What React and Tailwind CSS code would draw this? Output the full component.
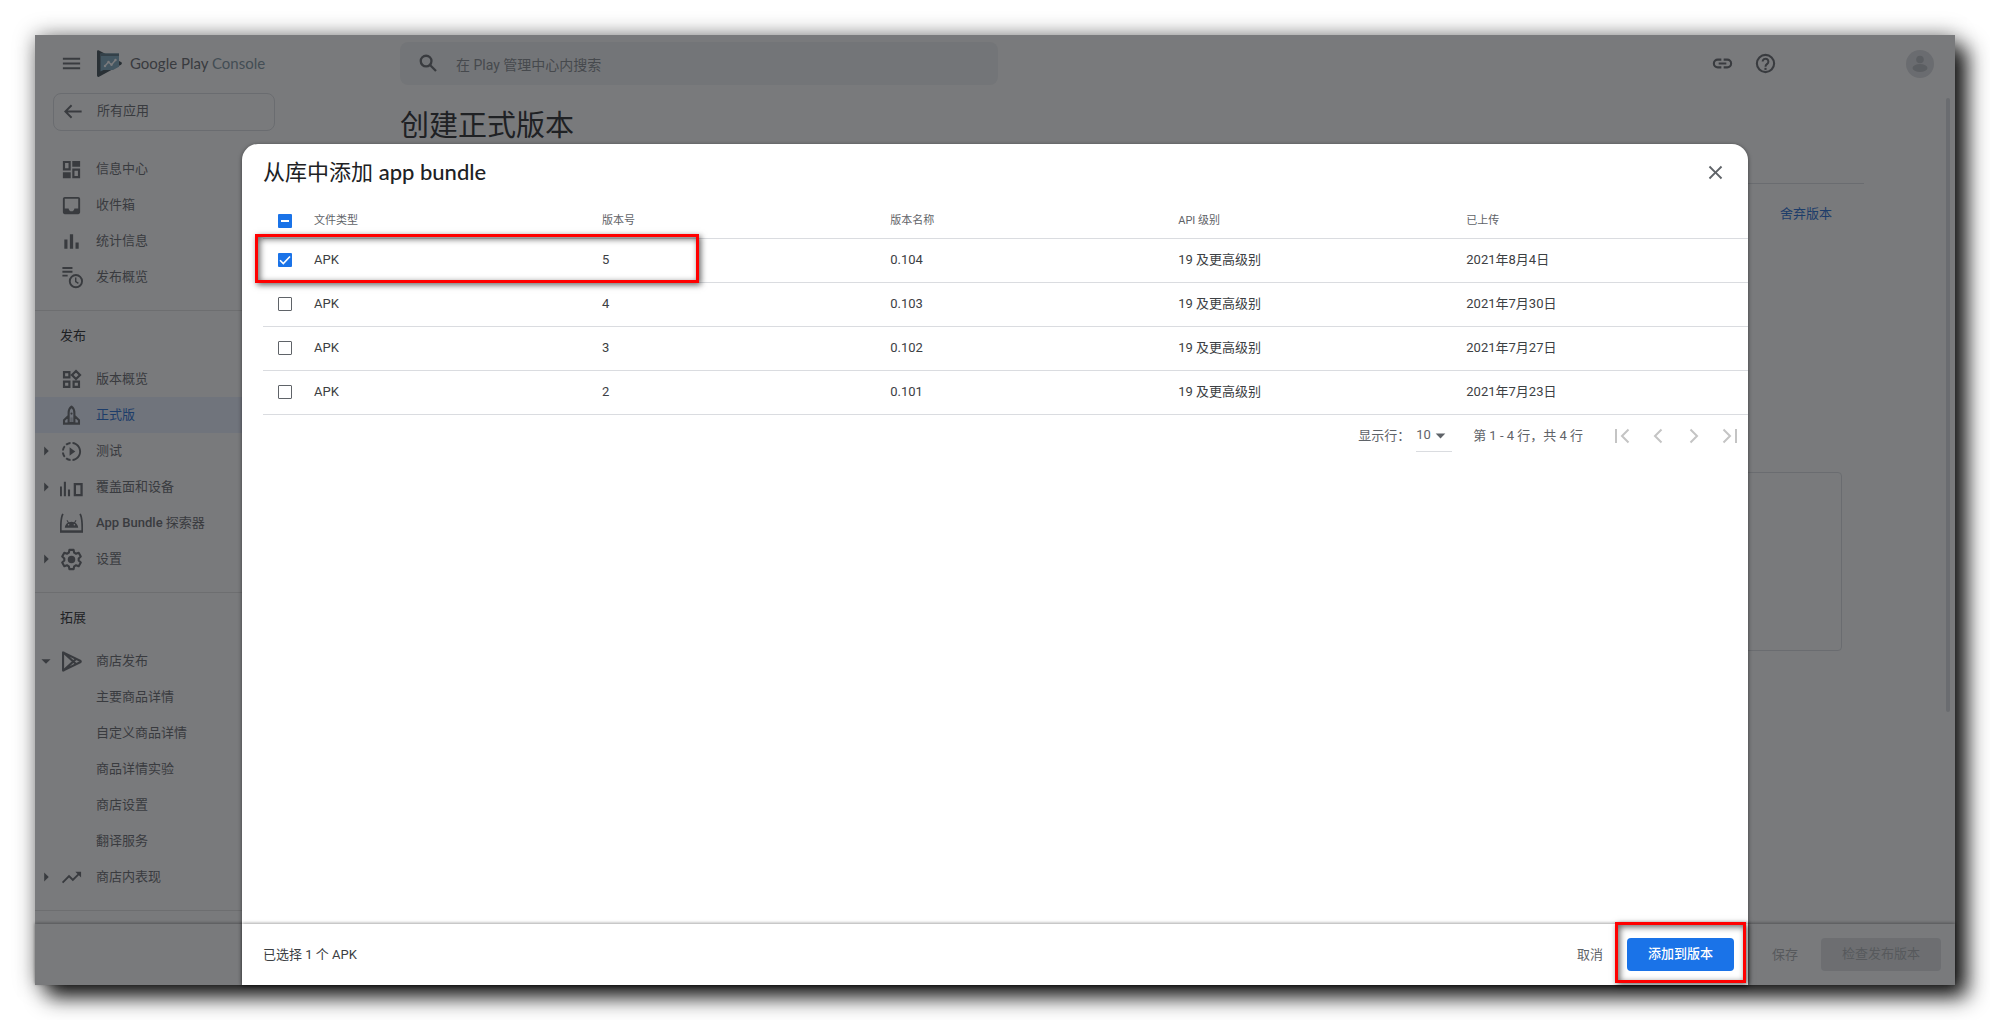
import React from "react";
import {
  MdMenu, MdInbox, MdOutlineSlowMotionVideo, MdTrendingUp,
  MdArrowRight, MdArrowDropDown, MdClose,
} from "react-icons/md";

function Icon({ children }) {
  return (
    <svg viewBox="0 0 24 24" className="size-[23px]" fill="currentColor" aria-hidden="true">
      {children}
    </svg>
  );
}

const BackIcon = () => (
  <Icon>
    <path d="M20.500 12H4M10 5.500L3.500 12l6.500 6.500" fill="none" stroke="currentColor" strokeWidth="2" />
  </Icon>
);
const SearchIcon = () => (
  <Icon>
    <g fill="none" stroke="currentColor" strokeWidth="2.400">
      <circle cx="9.500" cy="9.500" r="5.600" />
      <path d="M13.600 13.600l6.200 6.200" />
    </g>
  </Icon>
);
const LinkIcon = () => (
  <Icon>
    <path
      d="M10.800 8H7a4 4 0 0 0 0 8h3.800M13.200 8H17a4 4 0 0 1 0 8h-3.800M8 12h8"
      fill="none" stroke="currentColor" strokeWidth="2.200"
    />
  </Icon>
);
const HelpIcon = () => (
  <Icon>
    <circle cx="12" cy="12" r="9" fill="none" stroke="currentColor" strokeWidth="2.200" />
    <path d="M9 10a3 3 0 1 1 4.800 2.400c-1.100.9-1.800 1.300-1.800 2.900" fill="none" stroke="currentColor" strokeWidth="2.100" />
    <path d="M10.900 16.500h2.200v2.200h-2.200z" />
  </Icon>
);
const WidgetsIcon = () => (
  <Icon>
    <g fill="none" stroke="currentColor" strokeWidth="2.300">
      <path d="M4.200 4.200h5.600v5.600H4.200zM4.200 14.200h5.600v5.600H4.200zM14.200 14.200h5.600v5.600h-5.600zM16.700 3.100l4.200 4.200-4.200 4.200-4.200-4.200z" />
    </g>
  </Icon>
);
const DashboardIcon = () => (
  <Icon>
    <path fillRule="evenodd" d="M3 3h8.200v10H3zM5.300 5.300v5.400h3.600V5.300zM12.800 3H21v6.200h-8.200zM3 14.800h8.200V21H3zM12.800 11H21v10h-8.200zm2.300 2.300v5.400h3.600v-5.400z" />
  </Icon>
);
const StatsIcon = () => (
  <Icon>
    <path d="M4.500 10h3.300v9.500H4.500zM10.300 4.500h3.400v15h-3.400zM16.200 13h3.300v6.500h-3.300z" />
  </Icon>
);
const ReleaseClockIcon = () => (
  <Icon>
    <path d="M2.500 1h10.500v2H2.500zM2.500 5h10.500v2H2.500zM2.500 9h5.500v2H2.500z" />
    <circle cx="16.600" cy="15.800" r="6.400" fill="none" stroke="currentColor" strokeWidth="2" />
    <path d="M16.400 12v4.200l2.800 2" fill="none" stroke="currentColor" strokeWidth="1.500" />
  </Icon>
);
const RocketIcon = () => (
  <Icon>
    <path
      d="M9 20V9.500C9 6 10.500 3.800 12 2.800c1.500 1 3 3.200 3 6.700V20zM9 12.200L4.200 17v3.500h15.600V17L15 12.200"
      fill="none" stroke="currentColor" strokeWidth="2.200"
    />
    <circle cx="12" cy="10" r="1.100" />
    <path d="M10.800 14h2.400v6h-2.400z" opacity="0.350" />
  </Icon>
);
const DevicesIcon = () => (
  <Icon>
    <path d="M0 11h2v10H0zM4 6h2.200v15H4zM8.300 14h2.200v7H8.300z" />
    <path d="M15.500 8.500h7v11.500h-7z" fill="none" stroke="currentColor" strokeWidth="2.400" />
  </Icon>
);
const BundleIcon = () => (
  <Icon>
    <path d="M3 2C1 6 .6 12 .9 20.500h22.200C23.400 12 23 6 21 2" fill="none" stroke="currentColor" strokeWidth="1.800" />
    <path d="M0 19.200h24v2.300H0z" />
    <path d="M5 16.500c.3-2.600 1.500-4.300 3.200-5.300L6.800 8.800l.9-.5 1.500 2.500c1.800-.7 3.900-.7 5.600 0l1.500-2.500.9.500-1.400 2.400c1.700 1 2.900 2.700 3.200 5.300zM9 14.200a.8.800 0 1 0 0-1.600.8.800 0 0 0 0 1.600zm6 0a.8.800 0 1 0 0-1.600.8.800 0 0 0 0 1.600z" fillRule="evenodd" />
  </Icon>
);
const GearIcon = () => (
  <Icon>
    <path
      d="M9.800 2h4.400l.6 2.900 1.900 1.100 2.800-1 2.200 3.900-2.200 2v2.200l2.200 2-2.200 3.900-2.800-1-1.900 1.100-.6 2.900H9.800l-.6-2.900-1.900-1.100-2.800 1-2.200-3.900 2.200-2v-2.200l-2.200-2L4.500 5l2.800 1 1.900-1.100z"
      fill="none" stroke="currentColor" strokeWidth="2.200" strokeLinejoin="round"
    />
    <circle cx="12" cy="12" r="3.900" />
  </Icon>
);
const PlayStoreIcon = () => (
  <Icon>
    <path
      d="M3.200 2.500v19L21 12.800c.9-.5.9-1.100 0-1.600zM3.500 2.500L17 14.800M3.500 21.500L17 9.200"
      fill="none" stroke="currentColor" strokeWidth="2.200" strokeLinejoin="round"
    />
  </Icon>
);

function Logo() {
  return (
    <svg viewBox="0 0 25 27" className="h-[27px] w-[25px]" aria-hidden="true">
      <path d="M0 1.500C0 .3 1 0 2 .4L24 12c1.200.7 1.200 2 0 2.700L2 26.700c-1 .5-2 0-2-1.200z" fill="#37474f" />
      <path d="M3.500 3.500H22v13.300L16 20H6.500l-3 1.500z" fill="#78a5bb" />
      <path d="M3.500 3.500H22V6H3.500z" fill="#54727f" />
      <path d="M8 16l3.500-4 3 2.700L18.500 10" fill="none" stroke="#fff" strokeWidth="1.400" />
      <g fill="#fff">
        <circle cx="8" cy="16" r="1.200" /><circle cx="11.500" cy="12" r="1.200" />
        <circle cx="14.500" cy="14.700" r="1.200" /><circle cx="18.500" cy="10" r="1.200" />
      </g>
    </svg>
  );
}

const mdCls = "size-[23px]";
const topItems = [
  { label: "信息中心", icon: <DashboardIcon /> },
  { label: "收件箱", icon: <MdInbox className={mdCls} /> },
  { label: "统计信息", icon: <StatsIcon /> },
  { label: "发布概览", icon: <ReleaseClockIcon /> },
];
const releaseItems = [
  { label: "版本概览", icon: <WidgetsIcon /> },
  { label: "正式版", icon: <RocketIcon />, active: true },
  { label: "测试", icon: <MdOutlineSlowMotionVideo className={mdCls} />, caret: "right" },
  { label: "覆盖面和设备", icon: <DevicesIcon />, caret: "right" },
  { label: "App Bundle 探索器", latin: "App Bundle", rest: " 探索器", icon: <BundleIcon /> },
  { label: "设置", icon: <GearIcon />, caret: "right" },
];
const growItems = [
  { label: "商店发布", icon: <PlayStoreIcon />, caret: "down" },
  { label: "主要商品详情" },
  { label: "自定义商品详情" },
  { label: "商品详情实验" },
  { label: "商店设置" },
  { label: "翻译服务" },
  { label: "商店内表现", icon: <MdTrendingUp className={mdCls} />, caret: "right" },
];

function NavList({ items }) {
  return (
    <ul>
      {items.map((it) => (
        <li key={it.label}>
          <a
            href="#"
            className={
              it.active
                ? "flex h-9 items-center bg-[#e8f0fe] text-[#1967d2]"
                : "flex h-9 items-center text-[#5f6368]"
            }
          >
            <span className="flex w-6 text-[#5f6368]">
              {it.caret === "right" && <MdArrowRight className="size-[22px]" />}
              {it.caret === "down" && <MdArrowDropDown className="size-[22px]" />}
            </span>
            <span className="flex w-6 justify-end text-[#5f6368]">{it.icon}</span>
            <span className="ml-[13px]">
              {it.latin ? <><span className="font-medium">{it.latin}</span>{it.rest}</> : it.label}
            </span>
          </a>
        </li>
      ))}
    </ul>
  );
}

function NavSection({ title, items }) {
  return (
    <section className="border-t border-[#e0e0e0] pb-[15px]">
      <h2 className="flex h-[50px] items-center pl-[25px] text-[#202124]">{title}</h2>
      <NavList items={items} />
    </section>
  );
}

function Check({ label, checked, mixed }) {
  const filled = checked || mixed;
  return (
    <span className="grid size-3.5">
      <input
        type="checkbox"
        aria-label={label}
        defaultChecked={checked}
        ref={(el) => { if (el) el.indeterminate = !!mixed; }}
        className={
          filled
            ? "col-start-1 row-start-1 size-3.5 appearance-none rounded-[1px] bg-[#1a73e8]"
            : "col-start-1 row-start-1 size-3.5 appearance-none rounded-[1px] border border-[#5f6368]"
        }
      />
      {filled && (
        <svg viewBox="0 0 14 14" className="pointer-events-none col-start-1 row-start-1 size-3.5" fill="none" stroke="#fff" strokeWidth="1.600">
          {mixed ? <path d="M3 7h8" strokeWidth="2" /> : <path d="M2 7.200l3.300 3.300L12 3.500" />}
        </svg>
      )}
    </span>
  );
}

const rows = [
  ["APK", "5", "0.104", "19 及更高级别", "2021年8月4日"],
  ["APK", "4", "0.103", "19 及更高级别", "2021年7月30日"],
  ["APK", "3", "0.102", "19 及更高级别", "2021年7月27日"],
  ["APK", "2", "0.101", "19 及更高级别", "2021年7月23日"],
];
const columns = ["文件类型", "版本号", "版本名称", "API 级别", "已上传"];

const pagers = [
  { label: "第一页", d: "M3 1v14M15.500 1.500L9 8l6.500 6.500" },
  { label: "上一页", d: "M12.500 1.500L6 8l6.500 6.500" },
  { label: "下一页", d: "M5.500 1.500L12 8l-6.500 6.500" },
  { label: "最后一页", d: "M2.500 1.500L9 8l-6.500 6.500M15 1v14" },
];

function Dialog() {
  return (
    <div
      role="dialog"
      aria-labelledby="dlg-title"
      className="relative flex flex-1 flex-col rounded-t-2xl bg-white shadow-[0_1px_4px_rgba(0,0,0,0.5)]"
    >
      <div className="flex h-[60px] items-center justify-between pb-1 pl-[21px] pr-[21px]">
        <h2 id="dlg-title" className="text-[22px] text-[#202124] font-['Lato','Noto_Sans_CJK_SC',sans-serif]">
          从库中添加 <span className="font-medium">app bundle</span>
        </h2>
        <button aria-label="关闭" className="text-[#5f6368]">
          <MdClose className={mdCls} />
        </button>
      </div>

      <div className="pl-[21px]">
        <table className="w-full table-fixed border-collapse text-left">
          <colgroup>
            <col className="w-[51px]" />
            <col className="w-[19.4%]" />
            <col className="w-[19.4%]" />
            <col className="w-[19.4%]" />
            <col className="w-[19.4%]" />
            <col />
          </colgroup>
          <thead>
            <tr className="h-[34px] border-b border-[#dadce0] text-[11px] text-[#5f6368]">
              <th className="pl-[15px]"><Check label="全选" mixed /></th>
              {columns.map((c) => (
                <th key={c} className="font-normal">{c}</th>
              ))}
            </tr>
          </thead>
          <tbody className="text-[#3c4043]">
            {rows.map((r, i) => (
              <tr key={r[1]} className="h-11 border-b border-[#dadce0]">
                <td className="pl-[15px]"><Check label={"选择版本 " + r[1]} checked={i === 0} /></td>
                {r.map((v, j) => (
                  <td key={j}>{v}</td>
                ))}
              </tr>
            ))}
          </tbody>
        </table>

        <div className="flex h-[42px] items-center justify-end text-[#5f6368]">
          <label htmlFor="rows-per-page">显示行：</label>
          <span className="ml-1.5 grid h-8 w-9 items-center border-b border-[#dadce0]">
            <select id="rows-per-page" className="col-start-1 row-start-1 appearance-none bg-transparent" defaultValue="10">
              <option>10</option>
            </select>
            <MdArrowDropDown className="pointer-events-none col-start-1 row-start-1 size-[23px] justify-self-end" />
          </span>
          <span className="ml-[21px] mr-[21px]">第 1 - 4 行，共 4 行</span>
          {pagers.map((p) => (
            <button key={p.label} aria-label={p.label} disabled className="flex w-9 justify-center text-[#c4c4c4]">
              <svg viewBox="0 0 18 16" className="h-4 w-[18px]" fill="none" stroke="currentColor" strokeWidth="2">
                <path d={p.d} />
              </svg>
            </button>
          ))}
        </div>
      </div>

      <div className="mt-auto flex h-[61px] items-center bg-white pb-0.5 pl-[21px] pr-3.5 pt-0.5 text-[#3c4043] shadow-[0_-1px_3px_rgba(0,0,0,0.35)]">
        <span>已选择 1 个 APK</span>
        <button className="ml-auto mr-6 text-[#5f6368]">取消</button>
        <button className="h-[33px] rounded bg-[#1a73e8] px-[21px] pb-0.5 font-medium text-white">添加到版本</button>
      </div>

      <div className="pointer-events-none absolute left-[13px] top-[90px] h-[49px] w-[444px] border-3 border-[#ff0000] shadow-[2px_2px_6px_rgba(0,0,0,0.6),inset_2px_2px_6px_rgba(0,0,0,0.6)]" />
      <div className="pointer-events-none absolute bottom-0.5 right-0.5 h-[61px] w-[131px] border-3 border-[#ff0000] shadow-[2px_2px_6px_rgba(0,0,0,0.6),inset_2px_2px_6px_rgba(0,0,0,0.6)]" />
    </div>
  );
}

export default function App() {
  return (
    <div className="flex min-h-screen bg-white p-[35px] text-[13px] leading-5 font-['Roboto','Noto_Sans_CJK_SC',sans-serif]">
      <div className="relative flex flex-1 flex-col bg-white shadow-[12px_12px_20px_rgba(0,0,0,0.9),0_0_20px_rgba(0,0,0,0.4)]">
        <header className="flex items-center pb-2 pt-[7px] text-[#5f6368]">
          <div className="flex w-[365px] items-center pl-[25px]">
            <button aria-label="菜单"><MdMenu className={mdCls} /></button>
            <a href="#" className="ml-3.5 flex items-center gap-2">
              <Logo />
              <span className="pb-0.5 text-[15px] font-['Lato',sans-serif]">
                Google Play <span className="text-[#78909c]">Console</span>
              </span>
            </a>
          </div>
          <label className="flex h-[43px] w-[598px] items-center rounded-lg bg-[#f1f3f4] pl-[17px]">
            <SearchIcon />
            <input
              type="search"
              aria-label="搜索"
              placeholder="在 Play 管理中心内搜索"
              className="ml-4 flex-1 bg-transparent pt-0.5 text-sm placeholder:text-[#80868b]"
            />
          </label>
          <div className="ml-auto flex items-center pr-[21px]">
            <button aria-label="链接" className="mr-5"><LinkIcon /></button>
            <button aria-label="帮助" className="mr-[129px]"><HelpIcon /></button>
            <button aria-label="账号">
              <svg viewBox="0 0 28 28" className="size-7">
                <circle cx="14" cy="14" r="14" fill="#dadce0" />
                <circle cx="14" cy="9.500" r="3.800" fill="#b4b8bd" />
                <ellipse cx="14" cy="18" rx="7.500" ry="4" fill="#b4b8bd" />
              </svg>
            </button>
          </div>
        </header>

        <div className="flex flex-1">
          <nav className="w-[365px]">
            <a href="#" className="mb-5 ml-[18px] flex h-[38px] w-[222px] items-center rounded-lg border border-[#dadce0] pb-0.5 pl-2 text-[#5f6368]">
              <BackIcon />
              <span className="ml-3">所有应用</span>
            </a>
            <NavList items={topItems} />
            <div className="h-[15px]" />
            <NavSection title="发布" items={releaseItems} />
            <NavSection title="拓展" items={growItems} />
            <div className="h-px bg-[#e0e0e0]" />
          </nav>
          <main className="flex-1 pr-[91px]">
            <h1 className="h-[91px] border-b border-[#dadce0] text-[29px] leading-[66px] text-[#202124]">创建正式版本</h1>
            <div className="flex h-[60px] items-center justify-end pr-8">
              <button className="text-[#1967d2]">舍弃版本</button>
            </div>
            <div className="mr-[22px] mt-[228px] h-[179px] rounded border border-[#dadce0]" />
          </main>
        </div>

        <footer className="flex h-[61px] items-center justify-end bg-white pr-3.5 shadow-[0_-1px_3px_rgba(0,0,0,0.4)]">
          <button disabled className="mr-[23px] text-[#aaadb0]">保存</button>
          <button disabled className="h-[33px] rounded bg-[#e0e2e4] px-[21px] pb-0.5 text-[#aaadb0]">检查发布版本</button>
        </footer>

        <div className="absolute right-[5px] top-[63px] h-[614px] w-1 rounded-sm bg-[#dadce0]" />

        <div className="absolute inset-0 flex bg-[#202124]/60 px-[207px] pt-[109px]">
          <Dialog />
        </div>
      </div>
    </div>
  );
}
